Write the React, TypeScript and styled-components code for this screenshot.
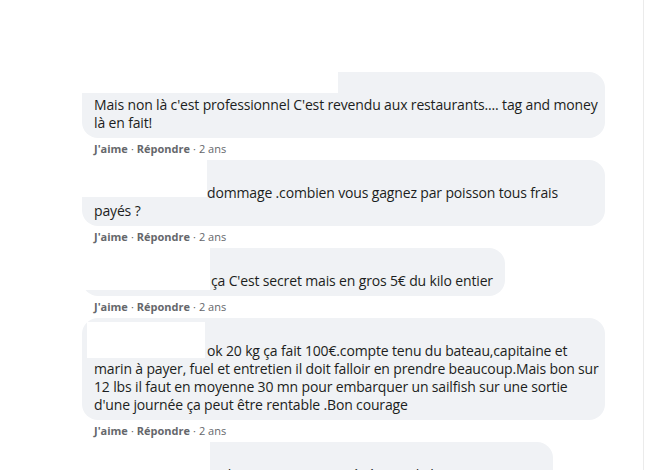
import React from 'react';
import styled, { createGlobalStyle } from 'styled-components';

const GlobalStyle = createGlobalStyle`
  html, body {
    margin: 0;
    padding: 0;
    background: #ffffff;
  }
  body {
    font-family: 'Open Sans', 'Noto Sans', sans-serif;
    color: #1c1e21;
  }
`;

interface CommentData {
  id: number;
  text: string;
  indent: number;
  wide: boolean;
  mask: { top: number; left: number; width: number; height: number };
}

const comments: CommentData[] = [
  {
    id: 1,
    text: "Mais non là c'est professionnel C'est revendu aux restaurants.... tag and money là en fait!",
    indent: 0,
    wide: true,
    mask: { top: 0, left: 0, width: 256, height: 21 },
  },
  {
    id: 2,
    text: 'dommage .combien vous gagnez par poisson tous frais payés\u00a0?',
    indent: 113,
    wide: true,
    mask: { top: 0, left: 0, width: 125, height: 37 },
  },
  {
    id: 3,
    text: "ça C'est secret mais en gros 5€ du kilo entier",
    indent: 117,
    wide: false,
    mask: { top: 0, left: 0, width: 128, height: 42 },
  },
  {
    id: 4,
    text: "ok 20 kg ça fait 100€.compte tenu du bateau,capitaine et marin à payer, fuel et entretien il doit falloir en prendre beaucoup.Mais bon sur 12 lbs il faut en moyenne 30 mn pour embarquer un sailfish sur une sortie d'une journée ça peut être rentable .Bon courage",
    indent: 113,
    wide: true,
    mask: { top: 4, left: 5, width: 118, height: 36 },
  },
  {
    id: 5,
    text: 'ici les marins sont payés à 70% de la vente en partie',
    indent: 117,
    wide: false,
    mask: { top: 0, left: 0, width: 128, height: 40 },
  },
];

const App = () => {
  return (
    <>
      <GlobalStyle />
      <Page>
        <Thread>
          {comments.map((c) => (
            <Comment key={c.id}>
              <Bubble $wide={c.wide}>
                <NameRow />
                <Body $indent={c.indent}>{c.text}</Body>
                <Mask
                  style={{
                    top: c.mask.top,
                    left: c.mask.left,
                    width: c.mask.width,
                    height: c.mask.height,
                  }}
                />
              </Bubble>
              <Meta>
                <MetaLink>J'aime</MetaLink>
                <Dot>·</Dot>
                <MetaLink>Répondre</MetaLink>
                <Dot>·</Dot>
                <span>2 ans</span>
              </Meta>
            </Comment>
          ))}
        </Thread>
      </Page>
    </>
  );
};

const Page = styled.div`
  width: 643px;
  height: 470px;
  overflow: hidden;
  border-right: 1px solid #ebebeb;
`;

const Thread = styled.div`
  display: flex;
  flex-direction: column;
  padding: 72px 0 0 82px;
`;

const Comment = styled.div`
  display: flex;
  flex-direction: column;
  align-items: flex-start;
  margin-bottom: 5px;
`;

const Bubble = styled.div<{ $wide: boolean }>`
  position: relative;
  box-sizing: border-box;
  width: ${(p) => (p.$wide ? '523px' : 'auto')};
  max-width: 523px;
  padding: 8px ${(p) => (p.$wide ? '5px' : '12px')} 6px 12px;
  background: #f0f2f5;
  border-radius: 16px;
  font-size: 14px;
  letter-spacing: -0.15px;
  line-height: 18px;
`;

const NameRow = styled.div`
  height: 16px;
`;

const Body = styled.div<{ $indent: number }>`
  text-indent: ${(p) => p.$indent}px;
`;

const Mask = styled.div`
  position: absolute;
  background: #ffffff;
`;

const Meta = styled.div`
  display: flex;
  align-items: center;
  gap: 3px;
  margin: 3px 0 0 12px;
  height: 14px;
  font-size: 11px;
  color: #65676b;
`;

const MetaLink = styled.span`
  font-weight: 700;
`;

const Dot = styled.span`
  font-weight: 400;
`;

export default App;
